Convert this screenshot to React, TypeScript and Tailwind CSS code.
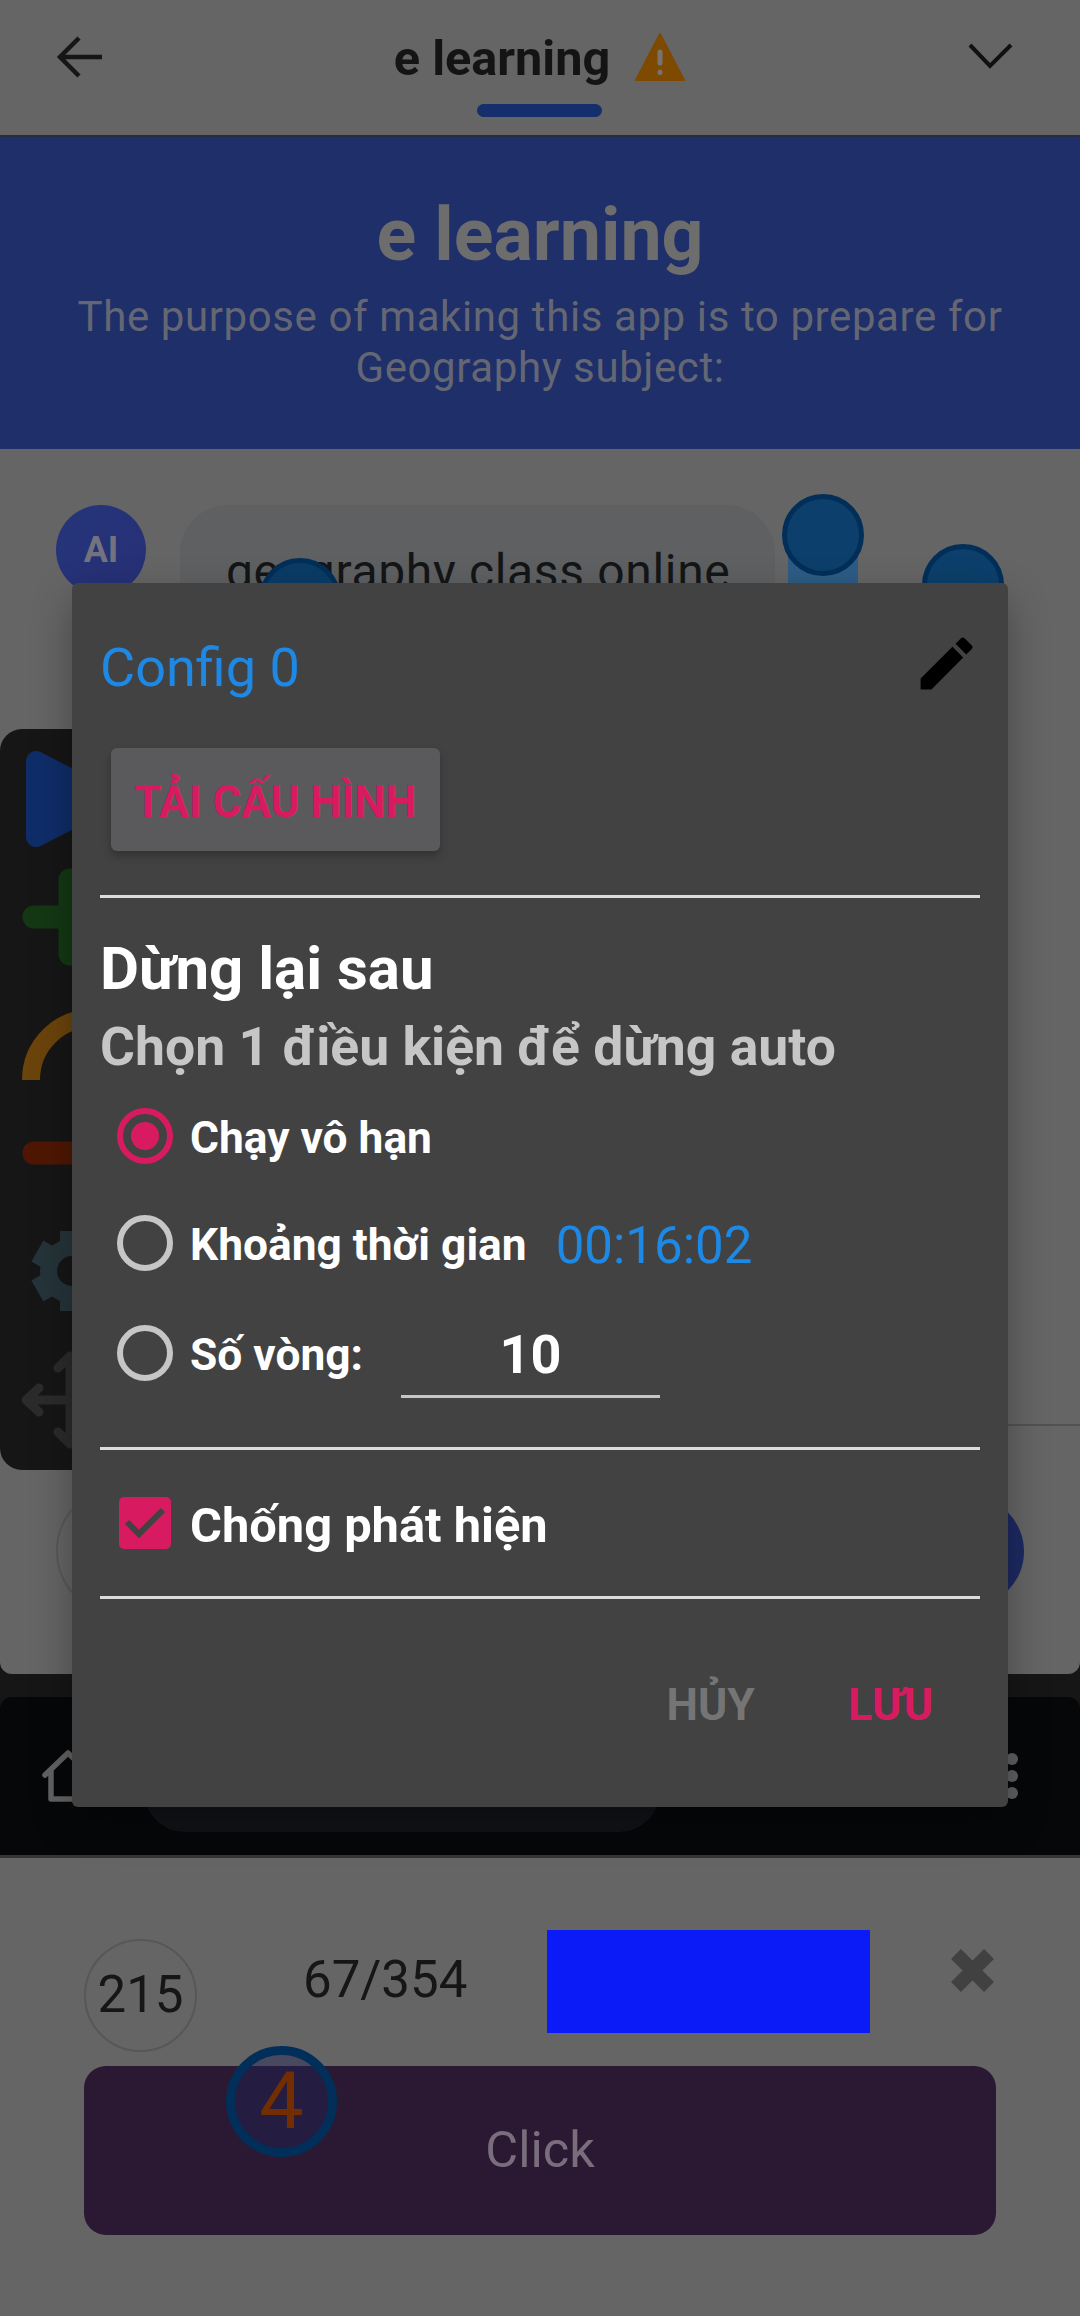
import React from 'react';

interface OptionRowProps {
  label: string;
  checked?: boolean;
  className?: string;
  children?: React.ReactNode;
}

// Radio option inside the config dialog
const OptionRow: React.FC<OptionRowProps> = ({ label, checked = false, className, children }) => (
  <div className={`flex h-20 items-center pl-[17px] ${className || ''}`}>
    <span
      className={`flex h-14 w-14 shrink-0 items-center justify-center rounded-full border-[6px] ${
        checked ? 'border-[#d81b60]' : 'border-[#c6c6c6]'
      }`}
    >
      {checked && <span className="h-7 w-7 rounded-full bg-[#d81b60]"></span>}
    </span>
    <span className="ml-[17px] pt-[5px] text-[44.3px] font-bold leading-none whitespace-nowrap text-white">{label}</span>
    {children}
  </div>
);

const Divider = ({ className }: { className?: string }) => (
  <div className={`h-[3px] bg-[#dcdcdc] ${className || ''}`}></div>
);

const TopBar = () => (
  <header className="flex h-[137px] shrink-0 items-start justify-between border-b-2 border-[#252c42] pl-[55px] pr-[66px]">
    <svg className="mt-[34px] h-12 w-12" viewBox="0 0 48 48" fill="none" stroke="#161616" strokeWidth={4.5}>
      <path d="M47 23H5M24 4L5 23l19 19" />
    </svg>
    <div className="flex flex-col items-center pl-[8px]">
      <div className="flex h-[104px] items-start pt-[30px]">
        <span className="text-[48.6px] font-bold leading-[58px] text-[#141414]">e learning</span>
        <svg className="ml-[25px] mt-[2px] h-[51px] w-[50px]" viewBox="0 0 50 51">
          <path d="M25 2L49 48H1z" fill="#7d4a00" stroke="#7d4a00" strokeWidth={2} strokeLinejoin="round" />
          <path d="M25 20v11M25 40v0.500" stroke="#777370" strokeWidth={5} strokeLinecap="round" />
        </svg>
      </div>
      <div className="h-[13px] w-[125px] rounded-full bg-[#142f6b]"></div>
    </div>
    <svg className="mt-[42px] h-7 w-[46px]" viewBox="0 0 46 28" fill="none" stroke="#111" strokeWidth={4}>
      <path d="M2 3l20 21L43 3" />
    </svg>
  </header>
);

const Banner = () => (
  <section className="flex h-[312px] shrink-0 flex-col items-center bg-[#1f2f69] pt-[55px] text-center">
    <h1 className="text-[73.5px] font-bold leading-[86px] text-[#6d6d6d]">e learning</h1>
    <p className="mt-[13px] w-[960px] text-[42px] leading-[51px] tracking-[0.6px] text-[#646773]">
      The purpose of making this app is to prepare for Geography subject:
    </p>
  </section>
);

const Chat = () => (
  <section className="relative flex h-[1225px] shrink-0 flex-col overflow-hidden rounded-b-[12px] bg-[#656565]">
    <div className="flex items-start px-14 pt-14">
      <div className="flex h-[90px] w-[90px] items-center justify-center rounded-full bg-gradient-to-br from-[#25357a] to-[#272f75]">
        <span className="text-[36px] font-bold text-[#737380]">AI</span>
      </div>
      <div className="ml-[34px] h-[134px] w-[595px] rounded-[48px] bg-[#5e6062] pl-[46px] pt-[38px]">
        <span className="text-[48px] leading-[58px] tracking-[0.67px] whitespace-nowrap text-[#141517]">
          geography class online
        </span>
      </div>
    </div>
    <div className="mt-[785px] h-[2px] bg-[#525252]"></div>
    <div className="mt-[60px] flex items-center justify-between px-14">
      <div className="h-[130px] w-[800px] rounded-full border-2 border-[#595959]"></div>
      <div className="h-[111px] w-[111px] rounded-full bg-[#1d2a62]"></div>
    </div>

    {/* tap markers */}
    <div className="absolute left-[788px] top-[90px] h-[120px] w-[70px] bg-[#2d5c84]"></div>
    <div className="absolute left-[782px] top-[45px] h-[82px] w-[82px] rounded-full border-[5px] border-[#022f59] bg-[#0c3f6b]"></div>
    <div className="absolute left-[922px] top-[95px] h-[82px] w-[82px] rounded-full border-[5px] border-[#022f59] bg-[#0c3f6b]"></div>
    <div className="absolute left-[259px] top-[109px] h-[82px] w-[82px] rounded-full border-[5px] border-[#022f59] bg-[#0a3c66]"></div>
  </section>
);

const BrowserBar = () => (
  <section className="h-[184px] shrink-0 border-b-[3px] border-[#353535] bg-[#161616] pt-[23px]">
    <div className="flex h-[158px] items-start justify-between rounded-t-[12px] bg-[#060709] pl-[42px] pr-[62px] pt-[53px]">
      <svg className="h-[54px] w-[54px]" viewBox="0 0 54 54" fill="none" stroke="#626262" strokeWidth={5.5} strokeLinecap="round" strokeLinejoin="round">
        <path d="M3 25L26 3l23 22M9 20v29h34V20" />
      </svg>
      <div className="-ml-[39px] h-[82px] w-[516px] rounded-full bg-[#121317]"></div>
      <svg className="ml-[260px] mt-[2px] h-[52px] w-3" viewBox="0 0 12 52" fill="#606060">
        <circle cx="6" cy="7" r="6" />
        <circle cx="6" cy="24" r="6" />
        <circle cx="6" cy="41" r="6" />
      </svg>
    </div>
  </section>
);

const ClickPanel = () => (
  <section className="relative h-[458px] shrink-0 bg-[#656565] px-[84px] pt-[72px]">
    <div className="flex h-[136px] items-start text-[51px] leading-[60px] text-[#161616]">
      <div className="mt-[9px] flex h-[113px] w-[113px] items-center justify-center rounded-full border-2 border-[#575757] pb-[2px]">
        215
      </div>
      <span className="ml-[106px] mt-[20px] w-[164px]">67/354</span>
      <div className="ml-[80px] h-[103px] w-[323px] bg-[#0b1bf7]"></div>
      <svg className="ml-[80px] mt-[19px] h-[43px] w-[45px]" viewBox="0 0 45 43" stroke="#414141" strokeWidth={14}>
        <path d="M6 5l33 33M39 5L6 38" />
      </svg>
    </div>
    <button className="flex h-[169px] w-full items-center justify-center rounded-[22px] bg-[#2b1934] pb-[2px] text-[50.5px] text-[#7a6e7d]">
      Click
    </button>
    <div className="absolute left-[226px] top-[188px] flex h-[111px] w-[111px] items-center justify-center rounded-full border-[9px] border-[#012f59] bg-[#1e2157]/40 text-[79px] leading-none text-[#722d00]">
      4
    </div>
  </section>
);

// Floating control strip, mostly hidden behind the dialog
const ToolStrip = () => (
  <aside className="absolute left-0 top-[729px] h-[741px] w-[140px] rounded-[22px] bg-[#161616]">
    <svg className="h-full w-full" viewBox="0 0 140 741" fill="none" strokeLinecap="round" strokeLinejoin="round">
      <path d="M36 32L110 70L36 108z" fill="#0f2d69" stroke="#0f2d69" strokeWidth={20} />
      <path d="M34 188h74M70 151v74" stroke="#143813" strokeWidth={23} />
      <path d="M31 351A62 62 0 0 1 93 289" stroke="#6b440b" strokeWidth={18} strokeLinecap="butt" />
      <path d="M34 424h74" stroke="#4f1703" strokeWidth={23} />
      <g stroke="#25343a" strokeLinecap="butt">
        <circle cx="72" cy="542" r="23.5" strokeWidth={17} />
        <path d="M60 502h24v16H60zM60 566h24v16H60z" fill="#25343a" stroke="none" />
        <path d="M60 502h24v16H60zM60 566h24v16H60z" fill="#25343a" stroke="none" transform="rotate(60 72 542)" />
        <path d="M60 502h24v16H60zM60 566h24v16H60z" fill="#25343a" stroke="none" transform="rotate(120 72 542)" />
      </g>
      <path
        d="M27 671h86M70 628v86M39 659L26 671l13 12M58 639l12-12 12 12M58 703l12 12 12-12"
        stroke="#2b2b2b"
        strokeWidth={9}
      />
    </svg>
  </aside>
);

const ConfigDialog = () => (
  <div className="absolute left-[72px] top-[583px] h-[1224px] w-[936px] rounded-[6px] bg-[#424242] px-7 pt-[46px] shadow-[0_16px_40px_rgba(0,0,0,0.3)]">
    <div className="flex h-[79px] items-start justify-between">
      <span className="text-[54px] leading-[78px] text-[#1e88e5]">Config 0</span>
      <svg className="-mr-px h-[69px] w-[69px]" viewBox="0 0 24 24" fill="#000">
        <path d="M3 17.250V21h3.750L17.810 9.940l-3.750-3.750L3 17.250zM20.710 7.040a1 1 0 0 0 0-1.410l-2.340-2.340a1 1 0 0 0-1.410 0l-1.830 1.830 3.750 3.750 1.830-1.830z" />
      </svg>
    </div>

    <button className="ml-[11px] mt-10 flex h-[103px] w-[329px] items-center justify-center rounded-[6px] bg-[#5a5a5c] pt-1 text-[44px] font-bold whitespace-nowrap text-[#d81b60] shadow-[0_5px_8px_rgba(0,0,0,0.25)]">
      TẢI CẤU HÌNH
    </button>
    <Divider className="mt-11" />

    <h2 className="mt-9 text-[60px] font-bold leading-[70px] whitespace-nowrap text-white">Dừng lại sau</h2>
    <p className="mt-2 text-[53.5px] font-bold leading-[70px] whitespace-nowrap text-[#c6c6c6]">
      Chọn 1 điều kiện để dừng auto
    </p>

    <OptionRow label="Chạy vô hạn" checked className="mt-[14px]" />
    <OptionRow label="Khoảng thời gian" className="mt-[27px]">
      <span className="ml-[29px] pt-[5px] text-[51px] leading-none text-[#1e88e5]">00:16:02</span>
    </OptionRow>
    <OptionRow label="Số vòng:" className="mt-[30px]">
      <div className="ml-[38px] flex h-[85px] w-[259px] items-center justify-center self-start border-b-[3px] border-[#c6c6c6] pt-[2px] text-[54px] font-bold leading-none text-white">
        10
      </div>
    </OptionRow>
    <Divider className="mt-[54px]" />

    <div className="mt-[33px] flex h-20 items-center pl-[19px]">
      <svg className="h-[52px] w-[52px]" viewBox="0 0 52 52" fill="none">
        <rect width="52" height="52" rx="5" fill="#d81b60" />
        <path d="M8 25l12 12 24-24" stroke="#424242" strokeWidth={6} />
      </svg>
      <span className="ml-[19px] pt-[6px] text-[48.8px] font-bold leading-none whitespace-nowrap text-white">
        Chống phát hiện
      </span>
    </div>
    <Divider className="mt-[33px]" />

    <div className="mt-[66px] flex h-20 items-center justify-end pr-[47px] text-[44.5px] font-bold">
      <button className="text-[#757575]">HỦY</button>
      <button className="ml-[93px] text-[#d81b60]">LƯU</button>
    </div>
  </div>
);

const App: React.FC = () => (
  <div className="relative flex h-[2316px] w-[1080px] flex-col overflow-hidden bg-[#656565] font-[Roboto,sans-serif]">
    <TopBar />
    <Banner />
    <div className="flex shrink-0 flex-col bg-[#161616]">
      <Chat />
    </div>
    <BrowserBar />
    <ClickPanel />
    <ToolStrip />
    <ConfigDialog />
  </div>
);

export default App;
